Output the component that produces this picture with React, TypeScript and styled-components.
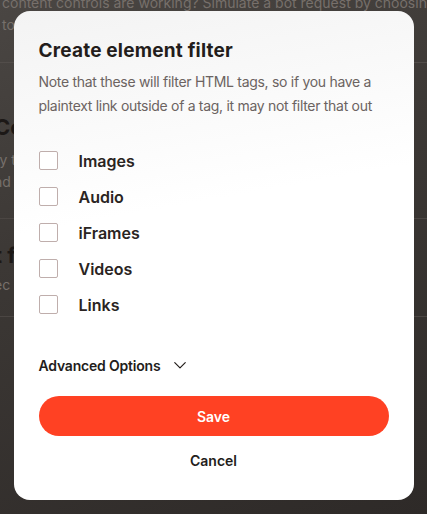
import React from 'react';
import styled, { createGlobalStyle } from 'styled-components';

const GlobalStyle = createGlobalStyle`
  html, body {
    margin: 0;
    padding: 0;
    height: 100%;
  }
  body {
    font-family: Inter, "Noto Sans", sans-serif;
    overflow: hidden;
  }
`;

const Page = styled.div`
  position: relative;
  width: 427px;
  height: 514px;
  overflow: hidden;
  background: linear-gradient(160deg, #4a4643 0%, #3c3835 40%, #2e2a28 100%);
  color: #77706b;
`;

const BackText = styled.div`
  margin-left: -6px;
  width: 520px;
  font-size: 14px;
  line-height: 22px;
`;

const BackLine = styled.p`
  margin: 0;
  white-space: nowrap;
`;

const BackTop = styled.div`
  margin-top: -8px;
  padding: 0 0 26px 8px;
  border-bottom: 1px solid #524d4a;
`;

const BackSection = styled.div<{ $top: number; $bottom: number }>`
  padding: ${(p) => p.$top}px 0 ${(p) => p.$bottom}px 0;
  border-bottom: 1px solid #4b4643;
`;

const BackHeading = styled.h2<{ $gap: number }>`
  margin: 0 0 ${(p) => p.$gap}px;
  font-size: 22px;
  line-height: 27px;
  font-weight: 700;
  color: #1c1816;
  white-space: nowrap;
`;

const Overlay = styled.div`
  position: absolute;
  inset: 0;
  display: flex;
  justify-content: center;
  padding-top: 11px;
`;

const Modal = styled.div`
  width: 400px;
  height: 489px;
  box-sizing: border-box;
  padding: 28px 25px 0;
  border-radius: 16px;
  background: linear-gradient(170deg, #f3f3f3 0%, #ffffff 40%, #ffffff 100%);
  display: flex;
  flex-direction: column;
`;

const Title = styled.h1`
  margin: 0;
  font-size: 19px;
  line-height: 24px;
  font-weight: 700;
  color: #231d1b;
  letter-spacing: 0.2px;
`;

const Description = styled.p`
  margin: 7px 0 0;
  font-size: 14px;
  line-height: 24px;
  color: #6b6361;
  letter-spacing: -0.3px;
`;

const OptionList = styled.div`
  margin-top: 33px;
  display: flex;
  flex-direction: column;
  gap: 17px;
`;

const OptionRow = styled.label`
  display: flex;
  align-items: center;
  gap: 21px;
  height: 19px;
`;

const Box = styled.span`
  width: 19px;
  height: 19px;
  box-sizing: border-box;
  border: 1px solid #bfaeac;
  border-radius: 2px;
  background: #fff;
`;

const OptionLabel = styled.span`
  font-size: 16px;
  font-weight: 600;
  color: #2a2422;
`;

const Advanced = styled.button`
  margin-top: 41px;
  padding: 0;
  border: none;
  background: none;
  display: flex;
  align-items: center;
  gap: 13px;
  font-family: inherit;
  font-size: 14px;
  font-weight: 600;
  color: #231d1b;
  letter-spacing: -0.2px;
  height: 20px;
`;

const SaveButton = styled.button`
  margin-top: 21px;
  width: 350px;
  height: 40px;
  border: none;
  border-radius: 20px;
  background: #ff4123;
  color: #fff;
  font-family: inherit;
  font-size: 14px;
  font-weight: 600;
`;

const CancelButton = styled.button`
  margin-top: 13px;
  padding: 0;
  border: none;
  background: none;
  font-family: inherit;
  font-size: 14px;
  font-weight: 600;
  color: #231d1b;
  height: 22px;
`;

const options = ['Images', 'Audio', 'iFrames', 'Videos', 'Links'];

export default function App() {
  return (
    <>
      <GlobalStyle />
      <Page>
        <BackText>
          <BackTop>
            <BackLine>content controls are working? Simulate a bot request by choosing</BackLine>
            <BackLine>to test</BackLine>
          </BackTop>
          <BackSection $top={51} $bottom={25}>
            <BackHeading $gap={8}>Content</BackHeading>
            <BackLine>ry to block content for bots and ... to crawlers</BackLine>
            <BackLine>nd more</BackLine>
          </BackSection>
          <BackSection $top={23} $bottom={20}>
            <BackHeading $gap={5}>t filters</BackHeading>
            <BackLine>ec</BackLine>
          </BackSection>
        </BackText>
        <Overlay>
          <Modal>
            <Title>Create element filter</Title>
            <Description>
              Note that these will filter HTML tags, so if you have a plaintext link outside of a tag,
              it may not filter that out
            </Description>
            <OptionList>
              {options.map((o) => (
                <OptionRow key={o}>
                  <Box />
                  <OptionLabel>{o}</OptionLabel>
                </OptionRow>
              ))}
            </OptionList>
            <Advanced>
              Advanced Options
              <svg width="14" height="14" viewBox="0 0 24 24" fill="none" stroke="#231d1b" strokeWidth="2" strokeLinecap="round" strokeLinejoin="round">
                <path d="M3 8l9 9 9-9" />
              </svg>
            </Advanced>
            <SaveButton>Save</SaveButton>
            <CancelButton>Cancel</CancelButton>
          </Modal>
        </Overlay>
      </Page>
    </>
  );
}
